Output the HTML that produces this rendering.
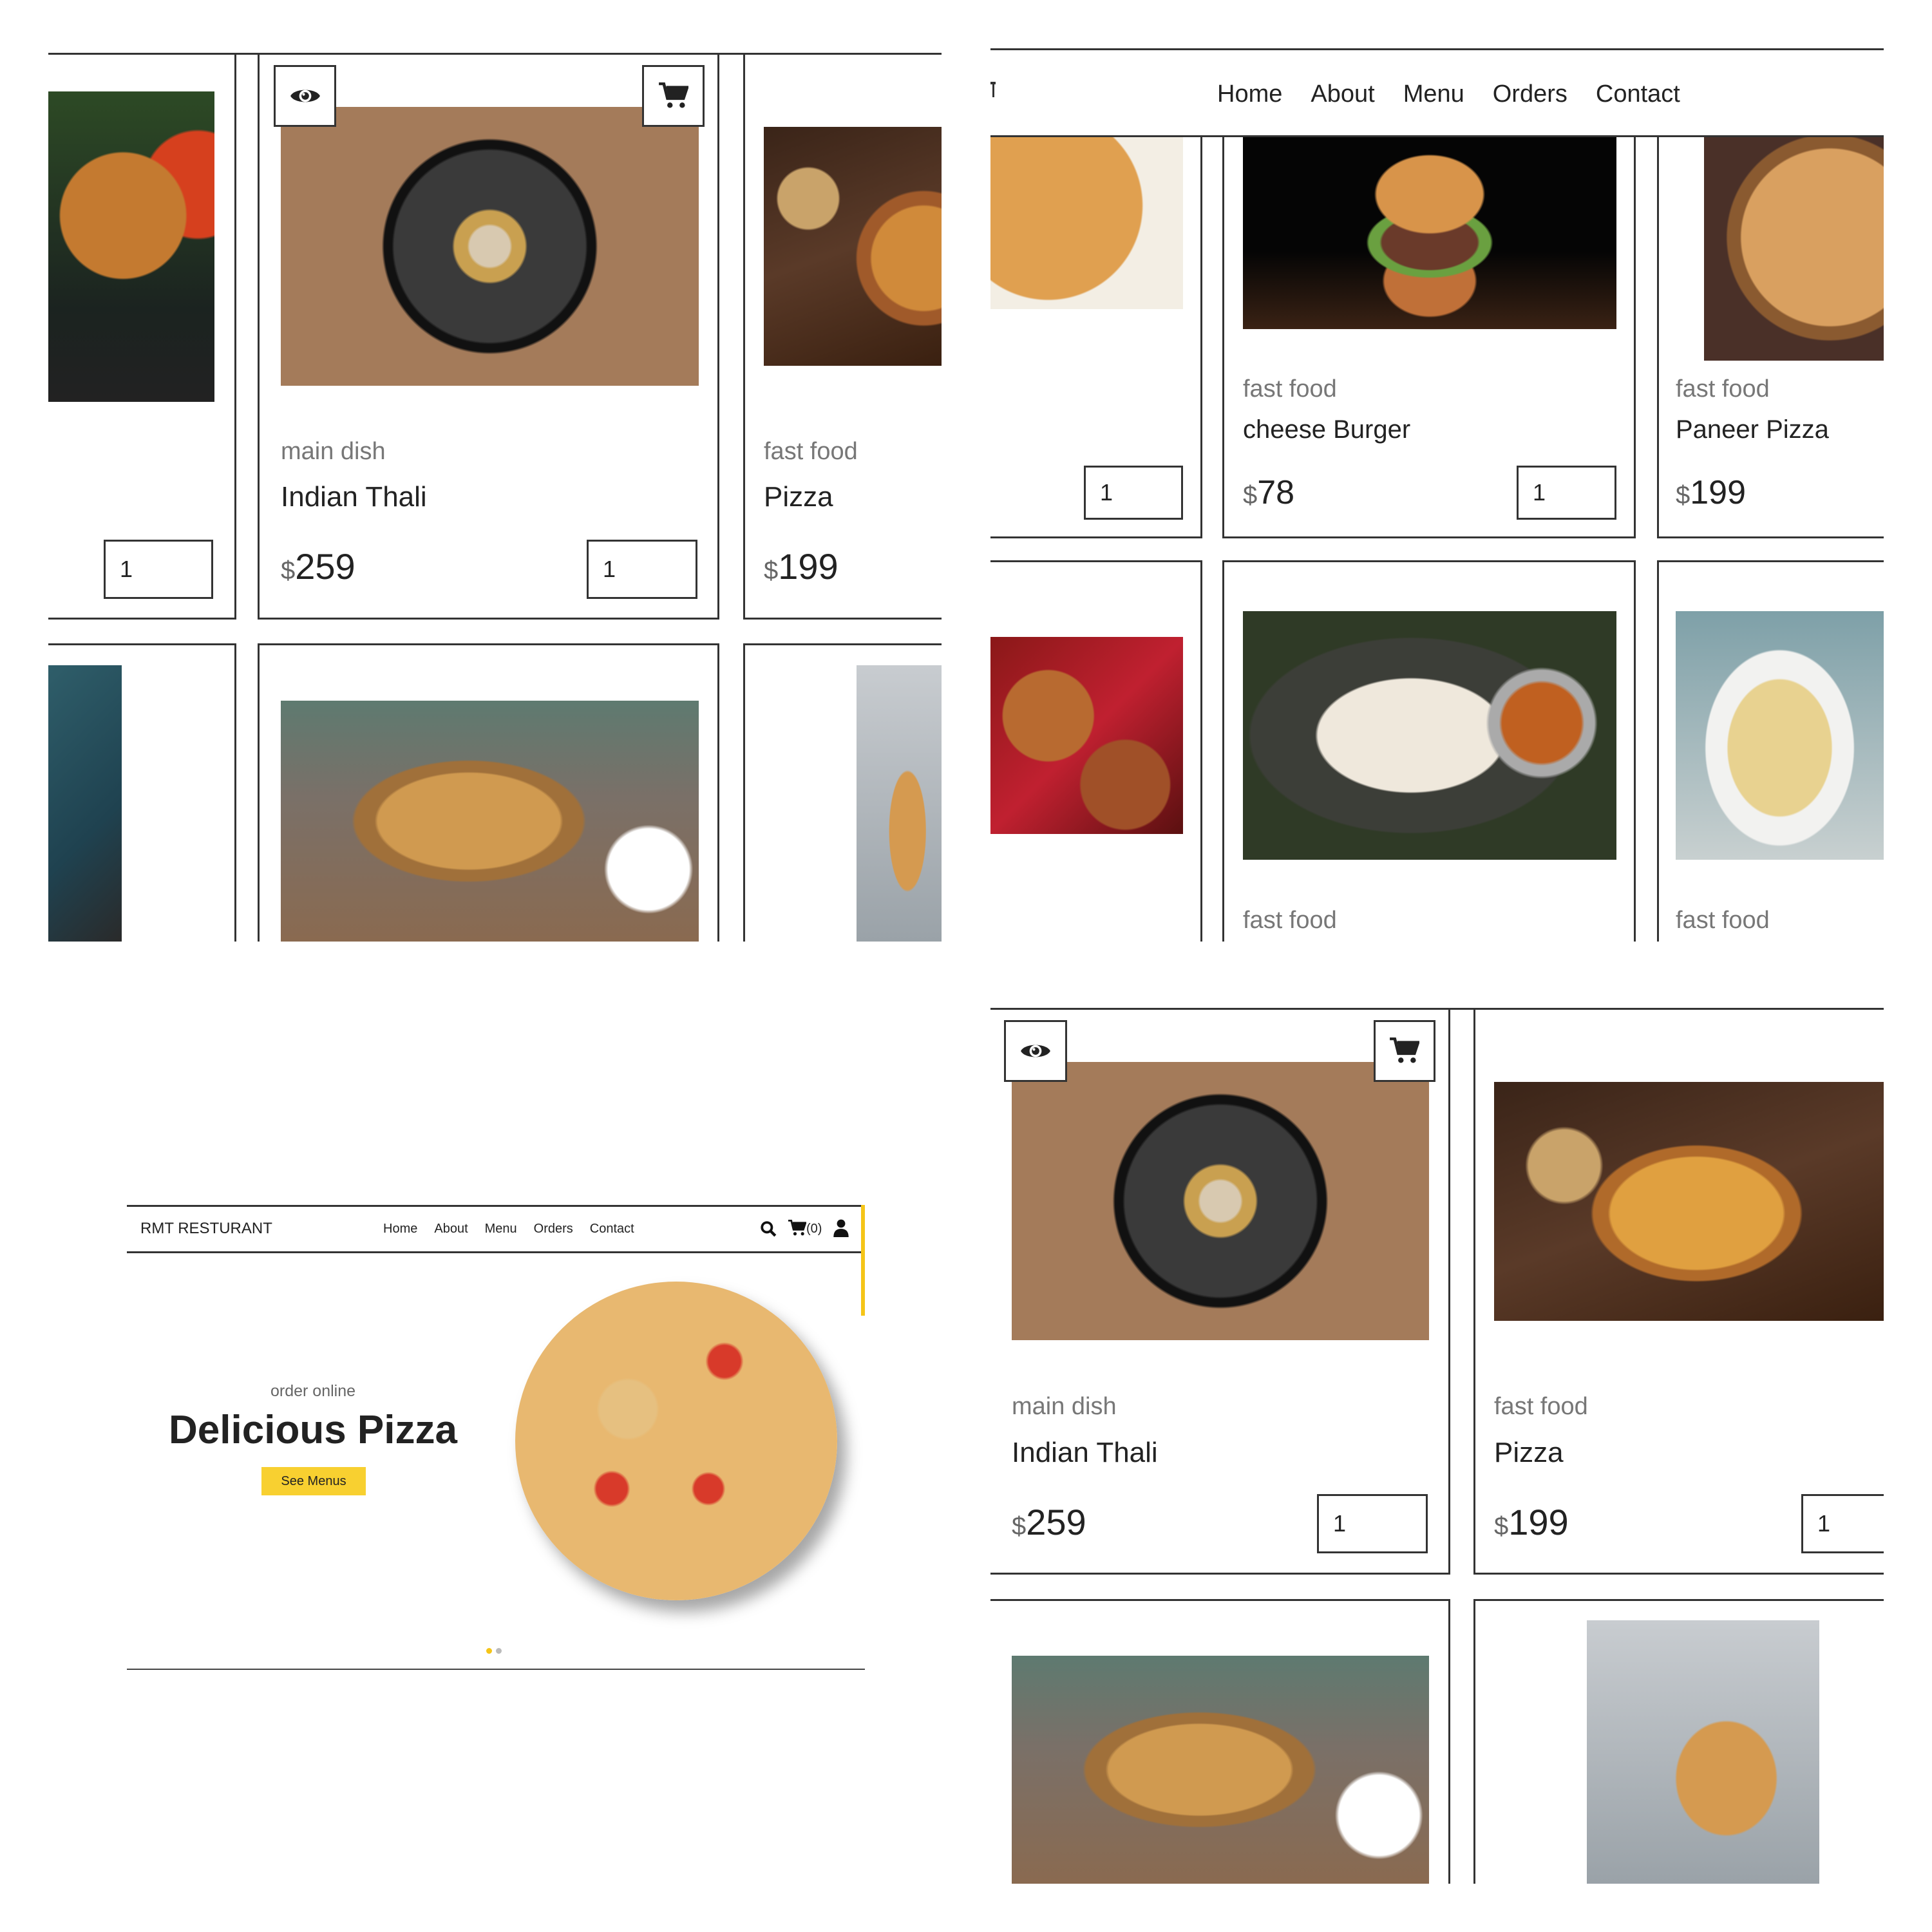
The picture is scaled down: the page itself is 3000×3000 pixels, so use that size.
<!DOCTYPE html>
<html><head><meta charset="utf-8">
<style>
*{margin:0;padding:0;box-sizing:border-box}
body{width:3000px;height:3000px;background:#fff;position:relative;overflow:hidden;font-family:"Liberation Sans",sans-serif;color:#222}
.q{position:absolute;overflow:hidden;background:#fff}
.a{position:absolute}
.card{position:absolute;border:3px solid #333;background:#fff}
.cat{position:absolute;font-size:38px;color:#777;white-space:nowrap}
.nm{position:absolute;font-size:44px;color:#222;white-space:nowrap}
.pr{position:absolute;font-size:56px;color:#222;white-space:nowrap}
.pr small{font-size:40px;color:#666}
.inp{position:absolute;border:3px solid #333;background:#fff;font-size:36px;padding-left:22px;display:flex;align-items:center}
.ib{position:absolute;border:3px solid #333;background:#fff;display:flex;align-items:center;justify-content:center}
.nav{display:flex;white-space:nowrap}
.thali{background:radial-gradient(circle at 50% 50%,#d8c9b0 0 8%,#c9a050 9% 14%,#3a3a3a 15% 38%,#111 39% 42%,#a47b5a 43%)}
.pizza1{background:radial-gradient(circle at 90% 55%,#d08a3a 0 25%,#a05a2a 26% 32%,transparent 33%),radial-gradient(circle at 25% 30%,#c9a36a 0 14%,transparent 15%),linear-gradient(160deg,#3a2418,#5a3a28 50%,#3a2010)}
.burgerL{background:radial-gradient(circle at 45% 40%,#c47a30 0 30%,transparent 31%),radial-gradient(circle at 90% 30%,#d6401e 0 20%,transparent 21%),linear-gradient(#2d4a25,#1b2320 70%,#222)}
.fries{background:radial-gradient(ellipse at 45% 50%,#d09a50 0 28%,#a0703a 29% 35%,transparent 36%),radial-gradient(circle at 88% 70%,#fff 0 10%,transparent 11%),linear-gradient(#5e7a70,#7a7068 40%,#8a6a50)}
.noodle{background:linear-gradient(135deg,#2f5e6a,#1f4250 60%,#2a2a2a)}
.sandw{background:radial-gradient(ellipse at 60% 60%,#d59a50 0 25%,transparent 26%),linear-gradient(#c8ccd0,#9aa2a8)}
.pizzaT{background:radial-gradient(circle at 30% 40%,#e0a050 0 55%,#f3eee4 56%),linear-gradient(#d7b080,#eee)}
.burger{background:radial-gradient(ellipse at 50% 30%,#d8944a 0 20%,transparent 21%),radial-gradient(ellipse at 50% 55%,#6a3a2a 0 18%,#6aa040 19% 23%,transparent 24%),radial-gradient(ellipse at 50% 75%,#c07038 0 17%,transparent 18%),linear-gradient(#050505 60%,#3a2214)}
.paneer{background:radial-gradient(circle at 70% 45%,#d9a060 0 50%,#8a5a30 51% 58%,#4a3028 59%)}
.curry{background:radial-gradient(circle at 30% 40%,#b86a30 0 25%,transparent 26%),radial-gradient(circle at 70% 75%,#a05028 0 22%,transparent 23%),linear-gradient(135deg,#8a1818,#c02030 50%,#5a1010)}
.momo{background:radial-gradient(circle at 80% 45%,#c06020 0 12%,#aaa 13% 16%,transparent 17%),radial-gradient(ellipse at 45% 50%,#efe8dc 0 32%,#3c3e38 33% 55%,#2f3a26 56%)}
.dump{background:radial-gradient(ellipse at 50% 55%,#e8d290 0 35%,#f2f2f0 36% 50%,transparent 51%),linear-gradient(#7ea0a8,#c8d0d0)}
.pizza2{background:radial-gradient(ellipse at 52% 55%,#e0a040 0 30%,#b06a2a 31% 36%,transparent 37%),radial-gradient(circle at 18% 35%,#c9a36a 0 10%,transparent 11%),linear-gradient(160deg,#3a2418,#5a3a28 50%,#3a2010)}
</style></head><body>

<!-- Q1 -->
<div class="q" style="left:75px;top:82px;width:1387px;height:1380px">
  <div class="a" style="left:0;top:0;width:1387px;height:3px;background:#333"></div>
  <div class="card" style="left:-100px;top:0;width:392px;height:880px"></div>
  <div class="a burgerL" style="left:0;top:60px;width:258px;height:482px"></div>
  <div class="inp" style="left:86px;top:756px;width:170px;height:92px">1</div>

  <div class="card" style="left:325px;top:0;width:717px;height:880px"></div>
  <div class="a thali" style="left:361px;top:84px;width:649px;height:433px"></div>
  <div class="ib" style="left:350px;top:19px;width:97px;height:96px"><svg width="50" height="36" viewBox="0 0 24 16"><path d="M1 8C4 2 20 2 23 8C20 14 4 14 1 8Z" fill="#222"/><circle cx="12" cy="8" r="4.5" fill="#fff"/><circle cx="12" cy="8" r="2.8" fill="#222"/><circle cx="10.8" cy="6.8" r="1" fill="#fff"/></svg></div>
  <div class="ib" style="left:922px;top:19px;width:97px;height:96px"><svg width="46" height="42" viewBox="0 0 24 22"><path d="M0 1h4l3 12h13l3-9H6" fill="none" stroke="#222" stroke-width="2.4"/><path d="M6 4h17l-3 9H8Z" fill="#222"/><circle cx="9" cy="18.5" r="2.2" fill="#222"/><circle cx="19" cy="18.5" r="2.2" fill="#222"/></svg></div>
  <div class="cat" style="left:361px;top:598px">main dish</div>
  <div class="nm" style="left:361px;top:665px">Indian Thali</div>
  <div class="pr" style="left:361px;top:765px"><small>$</small>259</div>
  <div class="inp" style="left:836px;top:756px;width:172px;height:92px">1</div>

  <div class="card" style="left:1079px;top:0;width:420px;height:880px"></div>
  <div class="a pizza1" style="left:1111px;top:115px;width:276px;height:371px"></div>
  <div class="cat" style="left:1111px;top:598px">fast food</div>
  <div class="nm" style="left:1111px;top:665px">Pizza</div>
  <div class="pr" style="left:1111px;top:765px"><small>$</small>199</div>

  <div class="card" style="left:-100px;top:917px;width:392px;height:600px"></div>
  <div class="a noodle" style="left:0;top:951px;width:114px;height:429px"></div>
  <div class="card" style="left:325px;top:917px;width:717px;height:600px"></div>
  <div class="a fries" style="left:361px;top:1006px;width:649px;height:374px"></div>
  <div class="card" style="left:1079px;top:917px;width:420px;height:600px"></div>
  <div class="a sandw" style="left:1255px;top:951px;width:132px;height:429px"></div>
</div>

<!-- Q2 -->
<div class="q" style="left:1538px;top:75px;width:1387px;height:1387px">
  <div class="card" style="left:-100px;top:120px;width:429px;height:641px"></div>
  <div class="a pizzaT" style="left:0;top:137px;width:299px;height:268px"></div>
  <div class="inp" style="left:145px;top:648px;width:154px;height:84px">1</div>
  <div class="card" style="left:360px;top:120px;width:642px;height:641px"></div>
  <div class="a burger" style="left:392px;top:137px;width:580px;height:299px"></div>
  <div class="cat" style="left:392px;top:508px">fast food</div>
  <div class="nm" style="left:392px;top:570px;font-size:40px">cheese Burger</div>
  <div class="pr" style="left:392px;top:660px;font-size:52px"><small>$</small>78</div>
  <div class="inp" style="left:817px;top:648px;width:155px;height:84px">1</div>
  <div class="card" style="left:1035px;top:120px;width:420px;height:641px"></div>
  <div class="a paneer" style="left:1108px;top:137px;width:279px;height:348px"></div>
  <div class="cat" style="left:1064px;top:508px">fast food</div>
  <div class="nm" style="left:1064px;top:570px;font-size:40px">Paneer Pizza</div>
  <div class="pr" style="left:1064px;top:660px;font-size:52px"><small>$</small>199</div>

  <div class="card" style="left:-100px;top:795px;width:429px;height:700px"></div>
  <div class="a curry" style="left:0;top:914px;width:299px;height:306px"></div>
  <div class="card" style="left:360px;top:795px;width:642px;height:700px"></div>
  <div class="a momo" style="left:392px;top:874px;width:580px;height:386px"></div>
  <div class="cat" style="left:392px;top:1333px">fast food</div>
  <div class="card" style="left:1035px;top:795px;width:420px;height:700px"></div>
  <div class="a dump" style="left:1064px;top:874px;width:323px;height:386px"></div>
  <div class="cat" style="left:1064px;top:1333px">fast food</div>

  <div class="a" style="left:0;top:0;width:1387px;height:138px;background:#fff;border-top:3px solid #333;border-bottom:3px solid #333"></div>
  <div class="a" style="left:0;top:52px;width:8px;height:4px;background:#333"></div>
  <div class="a" style="left:3px;top:52px;width:3px;height:24px;background:#333"></div>
  <div class="a nav" style="left:352px;top:50px;font-size:38px;gap:44px"><span>Home</span><span>About</span><span>Menu</span><span>Orders</span><span>Contact</span></div>
</div>

<!-- Q3 -->
<div class="a" style="left:197px;top:1871px;width:1146px;height:3px;background:#333"></div>
<div class="a" style="left:197px;top:1943px;width:1142px;height:3px;background:#333"></div>
<div class="a" style="left:1337px;top:1871px;width:6px;height:172px;background:#f5c518"></div>
<div class="a" style="left:218px;top:1894px;font-size:24px">RMT RESTURANT</div>
<div class="a nav" style="left:595px;top:1897px;font-size:20px;gap:26px"><span>Home</span><span>About</span><span>Menu</span><span>Orders</span><span>Contact</span></div>
<svg class="a" style="left:1180px;top:1895px" width="26" height="26" viewBox="0 0 24 24"><circle cx="10" cy="10" r="7" fill="none" stroke="#111" stroke-width="3.5"/><path d="M15 15l7 7" stroke="#111" stroke-width="4"/></svg>
<svg class="a" style="left:1224px;top:1894px" width="28" height="26" viewBox="0 0 24 22"><path d="M0 1h4l3 12h13l3-9H6" fill="none" stroke="#111" stroke-width="2.4"/><path d="M6 4h17l-3 9H8Z" fill="#111"/><circle cx="9" cy="18.5" r="2.2" fill="#111"/><circle cx="19" cy="18.5" r="2.2" fill="#111"/></svg>
<div class="a" style="left:1252px;top:1897px;font-size:20px">(0)</div>
<svg class="a" style="left:1294px;top:1893px" width="24" height="28" viewBox="0 0 20 24"><circle cx="10" cy="6" r="5.5" fill="#111"/><path d="M0 24c0-8 4-11 10-11s10 3 10 11Z" fill="#111"/></svg>
<div class="a" style="left:386px;top:2146px;width:200px;text-align:center;font-size:25px;color:#666">order online</div>
<div class="a" style="left:186px;top:2185px;width:600px;text-align:center;font-size:62px;font-weight:bold;color:#222">Delicious Pizza</div>
<div class="a" style="left:406px;top:2278px;width:162px;height:44px;background:#f8d030;font-size:20px;display:flex;align-items:center;justify-content:center">See Menus</div>
<div class="a" style="left:800px;top:1990px;width:500px;height:495px;border-radius:50%;background:radial-gradient(circle at 35% 40%,#e6c080 0 10%,transparent 11%),radial-gradient(circle at 60% 65%,#d83a2a 0 5%,transparent 6%),radial-gradient(circle at 30% 65%,#d83a2a 0 5%,transparent 6%),radial-gradient(circle at 65% 25%,#d83a2a 0 5%,transparent 6%),radial-gradient(circle,#e8b870 0 80%,#d88a30 86%,#b06020 96%);box-shadow:14px 18px 24px rgba(0,0,0,.35)"></div>
<div class="a" style="left:755px;top:2559px;width:9px;height:9px;border-radius:50%;background:#f5c518"></div>
<div class="a" style="left:770px;top:2559px;width:9px;height:9px;border-radius:50%;background:#bbb"></div>
<div class="a" style="left:197px;top:2591px;width:1146px;height:2px;background:#444"></div>

<!-- Q4 -->
<div class="q" style="left:1538px;top:1565px;width:1387px;height:1360px">
  <div class="a" style="left:0;top:0;width:1387px;height:3px;background:#333"></div>
  <div class="card" style="left:-3px;top:0;width:717px;height:880px"></div>
  <div class="a thali" style="left:33px;top:84px;width:648px;height:432px"></div>
  <div class="ib" style="left:21px;top:19px;width:98px;height:96px"><svg width="50" height="36" viewBox="0 0 24 16"><path d="M1 8C4 2 20 2 23 8C20 14 4 14 1 8Z" fill="#222"/><circle cx="12" cy="8" r="4.5" fill="#fff"/><circle cx="12" cy="8" r="2.8" fill="#222"/><circle cx="10.8" cy="6.8" r="1" fill="#fff"/></svg></div>
  <div class="ib" style="left:595px;top:19px;width:96px;height:96px"><svg width="46" height="42" viewBox="0 0 24 22"><path d="M0 1h4l3 12h13l3-9H6" fill="none" stroke="#222" stroke-width="2.4"/><path d="M6 4h17l-3 9H8Z" fill="#222"/><circle cx="9" cy="18.5" r="2.2" fill="#222"/><circle cx="19" cy="18.5" r="2.2" fill="#222"/></svg></div>
  <div class="cat" style="left:33px;top:598px">main dish</div>
  <div class="nm" style="left:33px;top:666px">Indian Thali</div>
  <div class="pr" style="left:33px;top:766px"><small>$</small>259</div>
  <div class="inp" style="left:507px;top:755px;width:172px;height:92px">1</div>

  <div class="card" style="left:750px;top:0;width:700px;height:880px"></div>
  <div class="a pizza2" style="left:782px;top:115px;width:605px;height:371px"></div>
  <div class="cat" style="left:782px;top:598px">fast food</div>
  <div class="nm" style="left:782px;top:666px">Pizza</div>
  <div class="pr" style="left:782px;top:766px"><small>$</small>199</div>
  <div class="inp" style="left:1259px;top:755px;width:172px;height:92px">1</div>

  <div class="card" style="left:-3px;top:918px;width:717px;height:600px"></div>
  <div class="a fries" style="left:33px;top:1006px;width:648px;height:354px"></div>
  <div class="card" style="left:750px;top:918px;width:700px;height:600px"></div>
  <div class="a sandw" style="left:926px;top:951px;width:361px;height:409px"></div>
</div>
</body></html>
